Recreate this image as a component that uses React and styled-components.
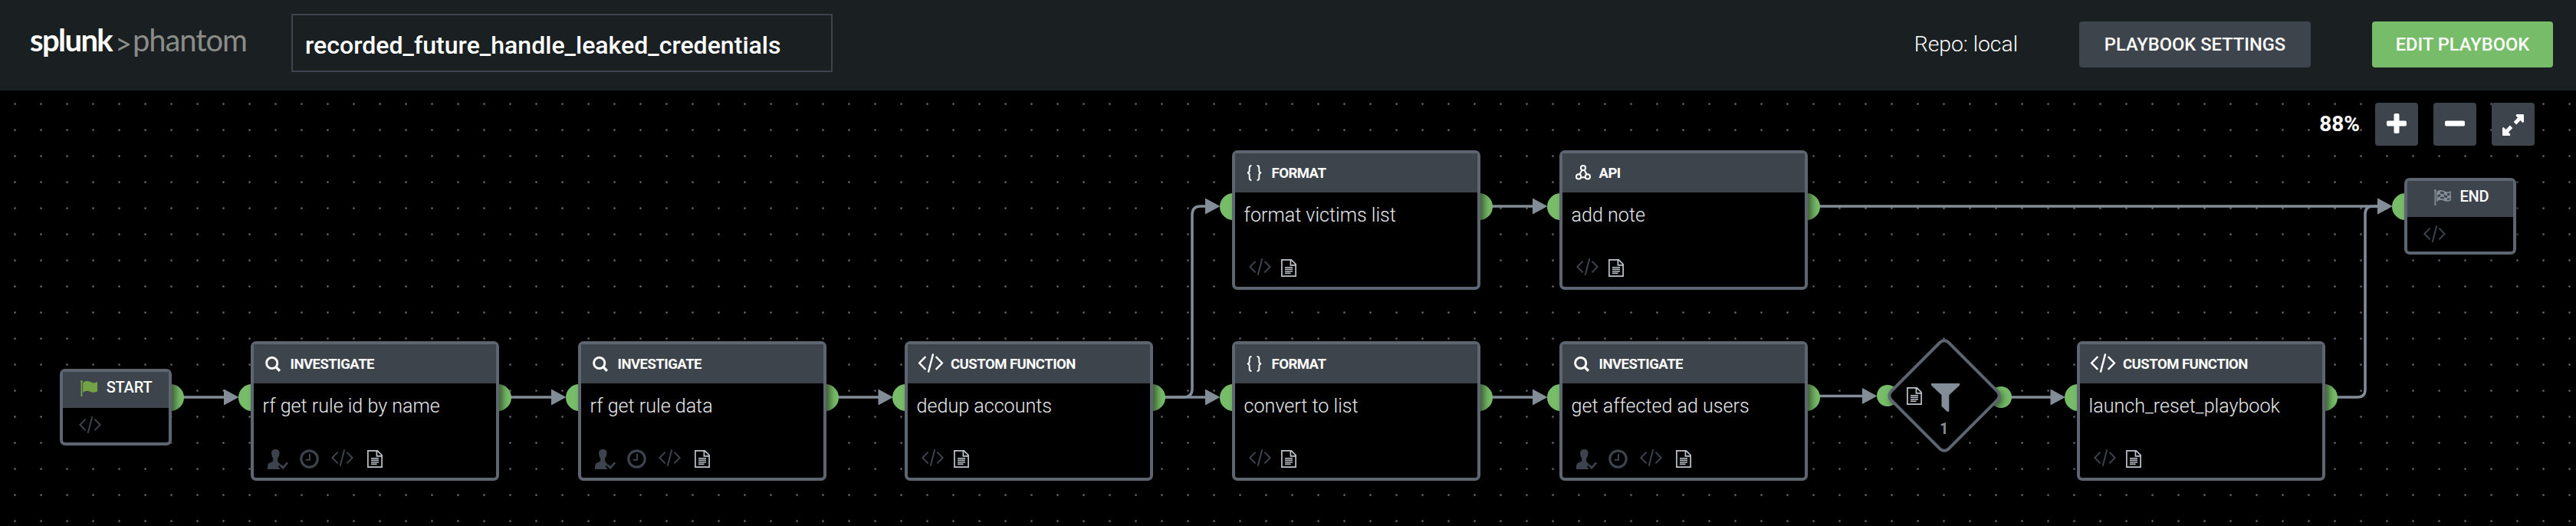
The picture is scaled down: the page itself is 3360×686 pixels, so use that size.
import React from "react";
import styled, { createGlobalStyle } from "styled-components";

const color = {
  bar: "#1a1f22",
  panel: "#3d444c",
  border: "#5d6571",
  edge: "#838d98",
  green: "#77bc69",
  dim: "#3c434c",
  doc: "#bdc3ca",
};

const GlobalStyle = createGlobalStyle`
  * { box-sizing: border-box; }
  body { margin: 0; background: #000; font-family: Roboto, "Liberation Sans", sans-serif; color: #fff; }
`;

const Page = styled.div`
  display: flex;
  flex-direction: column;
  width: 3360px;
  height: 686px;
  overflow: hidden;
`;

const TopBar = styled.header`
  display: flex;
  align-items: center;
  height: 118px;
  flex: none;
  padding: 0 30px 0 39px;
  background: ${color.bar};
`;

const Logo = styled.div`
  display: flex;
  align-items: flex-start;
  width: 341px;
  height: 48px;
  line-height: 48px;
  margin-top: -14px;
  font-family: Lato, sans-serif;
  font-size: 40px;
  white-space: nowrap;
`;
const Brand = styled.span`
  width: 111px;
  font-weight: 700;
  letter-spacing: -1.6px;
`;
const Chevron = styled.span`
  width: 23px;
  padding-top: 4px;
  font-size: 38px;
  color: #8a8c88;
`;
const Product = styled.span`
  font-size: 40px;
  font-weight: 400;
  letter-spacing: -1.1px;
  color: #8a8c88;
`;

const NameField = styled.div`
  display: flex;
  align-items: center;
  width: 706px;
  height: 76px;
  margin-top: -6px;
  padding: 5px 0 0 16px;
  border: 2px solid #3c434c;
  font-size: 32.1px;
  font-weight: 500;
`;

const Actions = styled.div`
  display: flex;
  align-items: center;
  gap: 80px;
  margin: -2px 0 0 auto;
`;
const Repo = styled.span`
  padding-bottom: 1px;
  font-size: 28.3px;
  font-weight: 300;
`;
const Button = styled.button`
  width: ${(p) => p.$width}px;
  height: 60px;
  padding: 0;
  border: 0;
  border-radius: 4px;
  background: ${(p) => (p.$primary ? color.green : color.panel)};
  color: #fff;
  font: 500 23.7px Roboto, sans-serif;
  white-space: nowrap;
`;

const Canvas = styled.main`
  position: relative;
  flex: 1;
  background-color: #000;
  background-image: radial-gradient(circle at 19.5px 17.6px, #70757a 0, #4b5055 0.9px, transparent 2px);
  background-size: 34px 34px;
`;

const ZoomBar = styled.div`
  position: absolute;
  top: 16px;
  right: 54px;
  display: flex;
  align-items: center;
  gap: 20px;
`;
const ZoomLevel = styled.span`
  padding-bottom: 2px;
  font-size: 28px;
  font-weight: 700;
`;
const ZoomButton = styled.button`
  display: flex;
  align-items: center;
  justify-content: center;
  width: 56px;
  height: 56px;
  padding: 0;
  border: 0;
  border-radius: 4px;
  background: ${color.panel};
`;

const Edges = styled.svg`
  position: absolute;
  inset: 0;
  width: 3360px;
  height: 568px;
`;

const NodeBox = styled.div`
  position: absolute;
  left: ${(p) => p.$x}px;
  top: ${(p) => p.$y}px;
  width: ${(p) => (p.$small ? 146 : 324)}px;
  height: ${(p) => (p.$small ? 100 : 182)}px;
`;
const Port = styled.i`
  position: absolute;
  top: ${(p) => p.$top}px;
  ${(p) => p.$side}: -16px;
  width: 35px;
  height: 35px;
  border-radius: 50%;
  background: ${color.green};
`;
const Card = styled.section`
  position: relative;
  display: flex;
  flex-direction: column;
  width: 100%;
  height: 100%;
  border: 4px solid ${color.border};
  border-radius: 7px;
  background: #000;
  box-shadow: 5px 2px 9px rgba(0, 0, 0, 0.5);
`;
const CardHead = styled.header`
  display: flex;
  align-items: center;
  height: 51px;
  flex: none;
  padding-left: 12px;
  background: ${color.panel};
  font-size: 18.5px;
  font-weight: 700;
  letter-spacing: -0.5px;
`;
const HeadIcon = styled.span`
  width: ${(p) => (p.$wide ? 44 : 35.5)}px;
  padding-left: ${(p) => (p.$wide ? 0 : 3)}px;
`;
const CardName = styled.div`
  height: 86px;
  padding: 15px 0 0 11.6px;
  font-size: 25.1px;
  line-height: 30px;
  font-weight: 300;
  color: #e6e8eb;
  white-space: nowrap;
`;
const CardIcons = styled.footer`
  display: flex;
  align-items: flex-start;
  padding-left: 17.5px;
  gap: ${(p) => (p.$full ? 15.5 : 13)}px;
`;

const SmallHead = styled.header`
  display: flex;
  align-items: center;
  justify-content: center;
  gap: 12px;
  height: 47px;
  flex: none;
  padding: 0 0 4px 1px;
  background: ${color.panel};
`;
const SmallTitle = styled.span`
  padding-bottom: 3px;
  font-size: 20px;
  font-weight: 500;
  letter-spacing: -0.2px;
`;
const SmallBody = styled.div`
  padding: 11px 0 0 21px;
`;

const FilterBox = styled.div`
  position: absolute;
  left: 2462px;
  top: 324px;
  width: 148px;
  height: 148px;
`;
const FilterPort = styled.i`
  position: absolute;
  top: ${(p) => p.$top}px;
  ${(p) => p.$side}: -14px;
  width: 28px;
  height: 28px;
  border-radius: 50%;
  background: ${color.green};
`;
const Diamond = styled.div`
  position: absolute;
  inset: 19px;
  border: 4px solid ${color.border};
  border-radius: 10px;
  background: #000;
  transform: rotate(45deg);
  box-shadow: 5px 1px 9px rgba(0, 0, 0, 0.5);
`;
const FilterContent = styled.div`
  position: relative;
  display: grid;
  grid-template-columns: 32px 37px;
  justify-content: start;
  padding: 58px 0 0 25px;
`;
const FilterCount = styled.div`
  grid-column: 1 / -1;
  padding: 10px 0 0 43px;
  font-size: 20px;
  line-height: 24px;
  font-weight: 700;
  color: ${color.edge};
`;

const Icon = styled.svg`
  display: block;
  flex: none;
  width: ${(p) => p.$w}px;
  height: ${(p) => p.$h}px;
  margin: ${(p) => p.$m || 0};
  overflow: visible;
`;

const CodeIcon = ({ w = 29, h = 22, stroke = color.dim, sw = 2, m }) => (
  <Icon $w={w} $h={h} $m={m} viewBox="0 0 29 22" fill="none" stroke={stroke} strokeWidth={sw}>
    <path d="M8.6 3.6L1.4 11l7.2 7.4M20.4 3.6l7.2 7.4-7.2 7.4M17.3.3l-5.6 21.4" />
  </Icon>
);
const DocIcon = ({ m }) => (
  <Icon $w={20} $h={23} $m={m} viewBox="0 0 20 23" fill="none" stroke={color.doc}>
    <path strokeWidth="1.7" d="M.9.9h12.4L19.1 6.6v15.5H.9zM12.4.9v7h6.7" />
    <path strokeWidth="1.5" d="M5 10.8h10M5 13.3h10M5 15.8h10M5 18.2h7.6" />
  </Icon>
);
const UserIcon = () => (
  <Icon $w={27} $h={26} viewBox="0 0 27 26" fill={color.dim}>
    <path d="M10.4 0C6.9 0 4.8 1.8 5.1 5.4c.2 2.5.7 4.5 2.1 6.3v3.2c-.5 1.1-2.7 1.7-4.4 2.6C.5 18.7 0 20.3 0 26h16.8l-3-3.5 3-3.2c-1.6-1.5-3.5-2.4-3.7-4.3v-3.3c1.5-1.8 2.2-3.6 2.4-6.3C15.7 1.8 13.9 0 10.4 0z" />
    <path d="M15.3 21.2l1.8-1.6 3 2.4 5-5.5 2 1.6-6.9 8.1z" />
  </Icon>
);
const ClockIcon = () => (
  <Icon $w={25} $h={25} viewBox="0 0 25 25" fill="none" stroke={color.dim}>
    <circle cx="12.5" cy="12.5" r="10.7" strokeWidth="3.2" />
    <path strokeWidth="2" d="M13 5.8v8H7.6" />
  </Icon>
);
const SearchIcon = () => (
  <Icon $w={20} $h={20} viewBox="0 0 20 20" fill="none" stroke="#fff" strokeWidth="2.9">
    <circle cx="8.7" cy="8.4" r="7.1" />
    <path strokeWidth="3.4" d="M13.6 13.4l5.3 5.3" />
  </Icon>
);
const BracesIcon = () => (
  <Icon $w={20} $h={21} $m="-1px 0 0" viewBox="0 0 20 21" fill="none" stroke="#fff" strokeWidth="1.9">
    <path d="M6.4 1C4 1 3.7 2.2 3.7 4v3.5c0 1.7-.8 2.6-2.7 2.9 1.9.3 2.7 1.2 2.7 2.9V17c0 1.8.3 3 2.7 3M13.6 1C16 1 16.3 2.2 16.3 4v3.5c0 1.7.8 2.6 2.7 2.9-1.9.3-2.7 1.2-2.7 2.9V17c0 1.8-.3 3-2.7 3" />
  </Icon>
);
const ApiIcon = () => (
  <Icon $w={20} $h={20} $m="-2px 0 0 1.5px" viewBox="0 0 20 20" fill="none" stroke="#fff" strokeWidth="2">
    <circle cx="10" cy="4" r="3.1" />
    <circle cx="4.1" cy="15.4" r="3.1" />
    <circle cx="15.9" cy="15.4" r="3.1" />
    <path d="M8.4 6.9l-3 5.4M11.6 6.9l3 5.4M7.3 16.2h5.4" />
  </Icon>
);
const flagShape =
  "M3.2 3.2C7-.2 11.5 1.2 14 2.6c2.8 1.5 5.4.7 8-.6v12.2c-3.7 2-6.5 2-9.5.5-3.2-1.5-6-1-9.3 1.3z";
const FlagIcon = () => (
  <Icon $w={22} $h={21} viewBox="0 0 22 21" fill="#73a346">
    <path d="M.5 1.5h1.8V21H.5z" />
    <circle cx="1.4" cy="1.4" r="1.4" />
    <path d={flagShape} />
  </Icon>
);
const FinishIcon = () => (
  <Icon $w={22} $h={21} $m="0 0 0 2px" viewBox="0 0 22 21" fill={color.edge}>
    <path d="M.5 1.5h1.8V21H.5z" />
    <circle cx="1.4" cy="1.4" r="1.4" />
    <path d={flagShape} />
    <path
      fill={color.panel}
      d="M8.2 2.8c1.8-.3 3 .2 4.6.9v3.1c-1.6-.9-3-1.2-4.6-.9zM17 5.2c1.2 0 2.4-.3 3.6-.9v2.9c-1.2.6-2.4.9-3.6.9zM4.4 7.7c1.3-.9 2.5-1.5 3.8-1.8v3c-1.3.3-2.5.8-3.8 1.8zM12.8 6.8c1.5.8 2.8 1.2 4.2 1.3v3c-1.4-.1-2.7-.4-4.2-1.2zM8.2 9.9c1.6-.4 3-.1 4.6.6v2.2c-1.5-.7-3-.9-4.6-.6zM17 11.9c1.2 0 2.4-.4 3.6-1v2.1c-1.2.5-2.4.9-3.6.9z"
    />
  </Icon>
);
const FunnelIcon = () => (
  <Icon $w={37} $h={37} viewBox="0 0 37 37" fill={color.edge}>
    <path d="M0 0h37v2.5L23.3 15.2V36.8h-2.6l-7.2-7.1V15.2L0 2.5z" />
  </Icon>
);
const PlusIcon = () => (
  <Icon $w={26} $h={26} $m="-2px 0 0" viewBox="0 0 26 26" fill="#fff">
    <rect x="0" y="9.5" width="26" height="7" rx="1.8" />
    <rect x="9.5" y="0" width="7" height="26" rx="1.8" />
  </Icon>
);
const MinusIcon = () => (
  <Icon $w={26} $h={26} $m="-2px 0 0" viewBox="0 0 26 26" fill="#fff">
    <rect x="0" y="9.5" width="26" height="7" rx="1.8" />
  </Icon>
);
const ExpandIcon = () => (
  <Icon $w={28} $h={28} $m="1px 0 0" viewBox="0 0 28 28" fill="#fff">
    <path d="M18.5 0H27a1 1 0 0 1 1 1v9.3l-1.6.6-3-2.9-5.2 5.4-3.5-3.5 5.3-5.3-2.5-2.8z" />
    <path d="M9.5 28H1a1 1 0 0 1-1-1v-9.3l1.6-.6 3 2.9 5.2-5.4 3.5 3.5L8 23.4l2.5 2.8z" />
  </Icon>
);

const headIcons = {
  INVESTIGATE: <SearchIcon />,
  FORMAT: <BracesIcon />,
  API: <ApiIcon />,
  "CUSTOM FUNCTION": <CodeIcon w={34} h={25} stroke="#fff" sw={2.1} m="-2px 0 0 0.5px" />,
};

const TOP = 78;
const BOTTOM = 327;

const blocks = [
  { x: 327, y: BOTTOM, kind: "INVESTIGATE", name: "rf get rule id by name" },
  { x: 754, y: BOTTOM, kind: "INVESTIGATE", name: "rf get rule data" },
  { x: 1180, y: BOTTOM, kind: "CUSTOM FUNCTION", name: "dedup accounts" },
  { x: 1607, y: TOP, kind: "FORMAT", name: "format victims list" },
  { x: 1607, y: BOTTOM, kind: "FORMAT", name: "convert to list" },
  { x: 2034, y: TOP, kind: "API", name: "add note" },
  { x: 2034, y: BOTTOM, kind: "INVESTIGATE", name: "get affected ad users" },
  { x: 2709, y: BOTTOM, kind: "CUSTOM FUNCTION", name: "launch_reset_playbook" },
];

const edges = [
  { d: "M238 400H300", tip: [311.5, 400] },
  { d: "M665 400H725", tip: [738.5, 400] },
  { d: "M1092 400H1150", tip: [1165, 400] },
  { d: "M1518 400H1580", tip: [1591.5, 400] },
  { d: "M1518 400H1544Q1555 400 1555 389V162Q1555 151 1566 151H1580", tip: [1591.5, 151] },
  { d: "M1945 151H2005", tip: [2018.5, 151] },
  { d: "M1945 400H2005", tip: [2018.5, 400] },
  { d: "M2372 398.5H2435", tip: [2448.5, 398.5] },
  { d: "M2620 400H2680", tip: [2694, 400] },
  { d: "M2372 151H3110", tip: [3120.5, 151] },
  { d: "M3047 400H3075Q3085 400 3085 390V161Q3085 151 3095 151H3110", tip: [3120.5, 151] },
];

function Block({ x, y, kind, name }) {
  const full = kind === "INVESTIGATE";
  return (
    <NodeBox $x={x} $y={y}>
      <Port $side="left" $top={55.5} />
      <Port $side="right" $top={55.5} />
      <Card>
        <CardHead>
          <HeadIcon $wide={kind === "CUSTOM FUNCTION"}>{headIcons[kind]}</HeadIcon>
          {kind}
        </CardHead>
        <CardName>{name}</CardName>
        <CardIcons $full={full}>
          {full && <UserIcon />}
          {full && <ClockIcon />}
          <CodeIcon />
          <DocIcon m={full ? "1px 0 0 3px" : "1px 0 0"} />
        </CardIcons>
      </Card>
    </NodeBox>
  );
}

export default function App() {
  return (
    <Page>
      <GlobalStyle />
      <TopBar>
        <Logo>
          <Brand>splunk</Brand>
          <Chevron>&gt;</Chevron>
          <Product>phantom</Product>
        </Logo>
        <NameField>recorded_future_handle_leaked_credentials</NameField>
        <Actions>
          <Repo>Repo: local</Repo>
          <Button $width={302}>PLAYBOOK SETTINGS</Button>
          <Button $width={236} $primary>EDIT PLAYBOOK</Button>
        </Actions>
      </TopBar>
      <Canvas>
        <Edges viewBox="0 0 3360 568">
          {edges.map(({ d, tip: [x, y] }) => (
            <g key={d}>
              <path d={d} fill="none" stroke={color.edge} strokeWidth="3.5" />
              <path d={`M${x} ${y}l-19.5-10.5v21z`} fill={color.edge} />
            </g>
          ))}
        </Edges>
        <NodeBox $x={78} $y={363} $small>
          <Port $side="right" $top={19.5} />
          <Card>
            <SmallHead>
              <FlagIcon />
              <SmallTitle>START</SmallTitle>
            </SmallHead>
            <SmallBody><CodeIcon /></SmallBody>
          </Card>
        </NodeBox>
        {blocks.map((b) => (
          <Block key={b.name} {...b} />
        ))}
        <FilterBox>
          <FilterPort $side="left" $top={60} />
          <FilterPort $side="right" $top={62} />
          <Diamond />
          <FilterContent>
            <DocIcon m="5px 0 0" />
            <FunnelIcon />
            <FilterCount>1</FilterCount>
          </FilterContent>
        </FilterBox>
        <NodeBox $x={3136} $y={114} $small>
          <Port $side="left" $top={19.5} />
          <Card>
            <SmallHead>
              <FinishIcon />
              <SmallTitle>END</SmallTitle>
            </SmallHead>
            <SmallBody><CodeIcon /></SmallBody>
          </Card>
        </NodeBox>
        <ZoomBar>
          <ZoomLevel>88%</ZoomLevel>
          <ZoomButton aria-label="Zoom in"><PlusIcon /></ZoomButton>
          <ZoomButton aria-label="Zoom out"><MinusIcon /></ZoomButton>
          <ZoomButton aria-label="Fit to screen"><ExpandIcon /></ZoomButton>
        </ZoomBar>
      </Canvas>
    </Page>
  );
}
